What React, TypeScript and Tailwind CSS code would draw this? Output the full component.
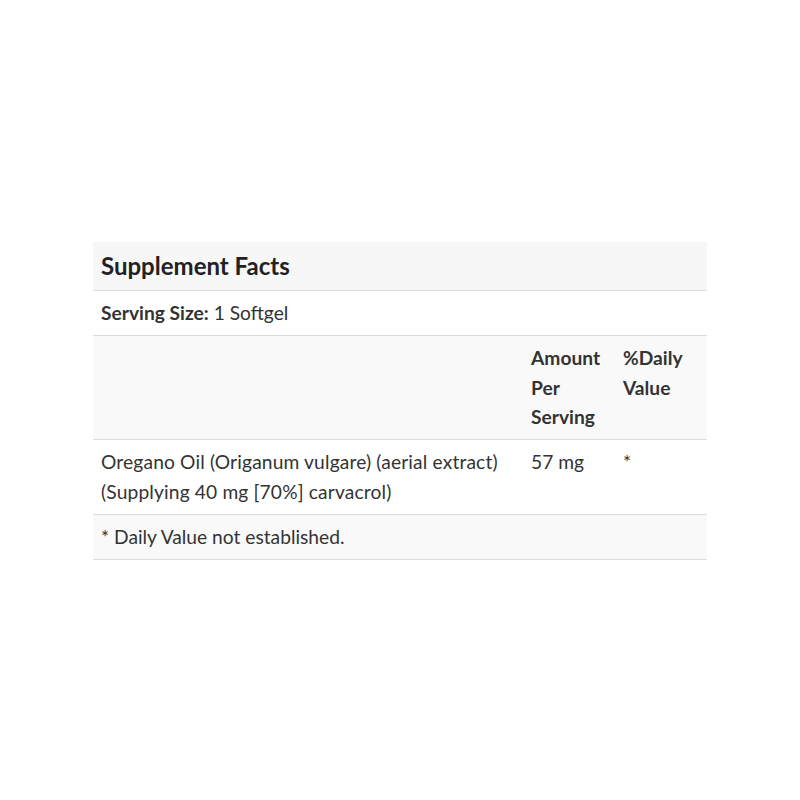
export default function App() {
  const font = { fontFamily: 'Lato, "Open Sans", sans-serif' };
  return (
    <div className="w-[800px] h-[800px] bg-white pt-[242px] pl-[93px]" style={font}>
      <table className="w-[614px] border-collapse text-[19.2px] text-[#333] leading-[30px]">
        <thead>
          <tr className="bg-[#f7f7f7] border-b border-[#dcdcdc]">
            <th colSpan={3} className="text-left font-bold text-[24px] leading-[34px] px-2 py-[7px] text-[#222]">
              Supplement Facts
            </th>
          </tr>
        </thead>
        <tbody>
          <tr className="bg-white border-b border-[#dcdcdc]">
            <td colSpan={3} className="px-2 py-[7px]">
              <span className="font-bold">Serving Size:</span> 1 Softgel
            </td>
          </tr>
          <tr className="bg-[#f9f9f9] border-b border-[#dcdcdc]">
            <td className="px-2 py-[7px] w-[430px]"></td>
            <td className="px-2 pt-[7px] pb-[7px] w-[92px] font-bold align-top leading-[29.5px]">Amount Per Serving</td>
            <td className="px-2 pt-[7px] pb-[7px] w-[92px] font-bold align-top leading-[29.5px]">%Daily Value</td>
          </tr>
          <tr className="bg-white border-b border-[#dcdcdc]">
            <td className="px-2 py-[7px] align-top tracking-[0.15px]">
              Oregano Oil (Origanum vulgare) (aerial extract)
              <br />
              (Supplying 40 mg [70%] carvacrol)
            </td>
            <td className="px-2 py-[7px] align-top">57 mg</td>
            <td className="px-2 py-[7px] align-top">*</td>
          </tr>
          <tr className="bg-[#f9f9f9] border-b border-[#dcdcdc]">
            <td colSpan={3} className="px-2 py-[7px]">* Daily Value not established.</td>
          </tr>
        </tbody>
      </table>
    </div>
  );
}
